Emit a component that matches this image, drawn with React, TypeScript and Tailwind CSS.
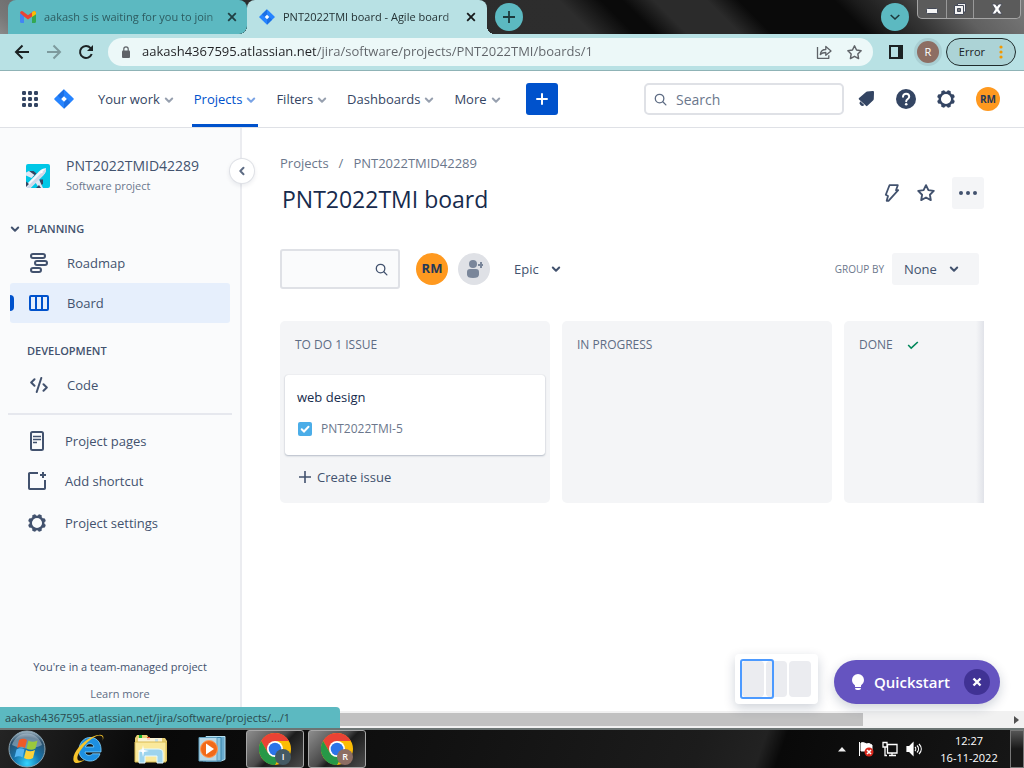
import type { ReactNode } from "react";

function Chevron({ className = "" }: { className?: string }) {
  return (
    <svg viewBox="0 0 10 10" className={`h-[10px] w-[10px] shrink-0 ${className}`} fill="none" stroke="currentColor" strokeWidth="2" strokeLinecap="round" strokeLinejoin="round" aria-hidden="true">
      <path d="M1.8 3.5 5 6.7 8.2 3.5" />
    </svg>
  );
}

function SearchIcon() {
  return (
    <svg viewBox="0 0 14 14" className="h-[13px] w-[13px] shrink-0" fill="none" stroke="currentColor" strokeWidth="1.4" strokeLinecap="round" aria-hidden="true">
      <circle cx="6" cy="6" r="4.6" />
      <path d="m9.5 9.5 3.3 3.3" />
    </svg>
  );
}

function CloseIcon() {
  return (
    <svg viewBox="0 0 10 10" className="h-[10px] w-[10px]" fill="none" stroke="currentColor" strokeWidth="1.8" aria-hidden="true">
      <path d="m1.2 1.2 7.6 7.6M8.8 1.2 1.2 8.8" />
    </svg>
  );
}

function JiraLogo({ className }: { className: string }) {
  return (
    <svg viewBox="0 0 20 20" className={className} aria-hidden="true">
      <path d="M10 .3 19.4 9.3a1 1 0 0 1 0 1.4L10 19.7.6 10.7a1 1 0 0 1 0-1.4z" fill="#2684ff" />
      <path d="M10 .3v6.9L7 10 3.6 6.6z" fill="#1868db" opacity=".75" />
      <path d="M10 19.7v-6.9l3-2.8 3.4 3.4z" fill="#1868db" opacity=".75" />
      <path d="m10 7.2 2.8 2.8-2.8 2.8L7.2 10z" fill="#fff" />
    </svg>
  );
}

const teeth = [22.5, 67.5, 112.5, 157.5, 202.5, 247.5, 292.5, 337.5];

function GearIcon() {
  return (
    <svg viewBox="0 0 20 20" className="h-5 w-5" aria-hidden="true">
      <circle cx="10" cy="10" r="6.3" fill="none" stroke="currentColor" strokeWidth="2.500" />
      {teeth.map((angle) => (
        <rect key={angle} x="8.1" y="1" width="3.8" height="3.600" rx="1.200" fill="currentColor" transform={`rotate(${angle} 10 10)`} />
      ))}
    </svg>
  );
}

function StarIcon({ className, width }: { className: string; width: string }) {
  return (
    <svg viewBox="0 0 20 20" className={className} fill="none" stroke="currentColor" strokeWidth={width} strokeLinejoin="round" aria-hidden="true">
      <path d="m10 2.2 2.4 4.9 5.4.8-3.9 3.8.9 5.4-4.8-2.6-4.8 2.6.9-5.4-3.9-3.8 5.4-.8z" />
    </svg>
  );
}

function TabStrip() {
  return (
    <header className="flex h-[34px] shrink-0 bg-[linear-gradient(45deg,#8a8a8a_0,#777_2%,#2c2c2c_24%,#2d2d2d_56%,#0a0a0a_60%,#0a0a0a_62%,#2b2b2b_65%,#2b2b2b_70%,#0a0a0a_73%,#0a0a0a_82%,#1c1c1c_84%,#343434_88%,#606060_93%,#7a7a7a_100%)]">
      <div className="ml-2 flex w-[239px] items-center rounded-t-lg rounded-br-lg bg-[#5cb9c1] pl-3 pr-[10px] text-[#2d5c61]">
        <svg viewBox="0 0 16 12" className="h-3 w-4 shrink-0" aria-hidden="true">
          <path d="M0 2v8.5A1.5 1.5 0 0 0 1.5 12H4V5z" fill="#4285f4" />
          <path d="M16 2v8.5a1.5 1.5 0 0 1-1.500 1.500H12V5z" fill="#34a853" />
          <path d="M0 2a2 2 0 0 1 3-1.600L8 4.200 13 .4A2 2 0 0 1 16 2L12 5.500 8 8.500 4 5.500z" fill="#ea4335" />
          <path d="M12 1.200 13 .4A2 2 0 0 1 16 2v1.200L12 6z" fill="#fbbc04" />
        </svg>
        <span className="ml-2 min-w-0 flex-1 whitespace-nowrap text-[11px] [mask-image:linear-gradient(90deg,#000_88%,#0004)]">aakash s is waiting for you to join</span>
        <button type="button" aria-label="Close tab" className="text-[#203f43]"><CloseIcon /></button>
      </div>
      <div className="relative flex w-60 items-center rounded-t-lg bg-[#b8e1e4] pl-3 pr-[11px] text-[#243234]">
        <JiraLogo className="h-4 w-4 shrink-0" />
        <span className="ml-2 min-w-0 flex-1 whitespace-nowrap text-[11px] [mask-image:linear-gradient(90deg,#000_86%,#0004)]">PNT2022TMI board - Agile board</span>
        <button type="button" aria-label="Close tab" className="text-[#16191a]"><CloseIcon /></button>
        <span className="absolute bottom-0 left-full h-2 w-2 bg-[radial-gradient(circle_at_100%_0,transparent_8px,#b8e1e4_8px)]" />
        <span className="absolute bottom-0 right-full h-2 w-2 bg-[radial-gradient(circle_at_0_0,transparent_8px,#b8e1e4_8px)]" />
      </div>
      <button type="button" aria-label="New tab" className="ml-2 mt-[3px] flex h-7 w-7 items-center justify-center rounded-full bg-[#5cb9c1] text-[#1d3a3d]">
        <svg viewBox="0 0 12 12" className="h-3 w-3" stroke="currentColor" strokeWidth="1.800" aria-hidden="true"><path d="M6 0v12M0 6h12" /></svg>
      </button>
      <div className="ml-auto flex items-start">
        <button type="button" aria-label="Search tabs" className="mr-2 mt-[3px] flex h-7 w-7 items-center justify-center rounded-full bg-[#5cb9c1] text-[#1d3a3d]">
          <svg viewBox="0 0 10 10" className="h-[10px] w-[10px]" fill="none" stroke="currentColor" strokeWidth="1.600" aria-hidden="true"><path d="m.7 3 4.300 4 4.300-4" /></svg>
        </button>
        <div className="mr-[3px] flex h-[19px] rounded-b-[5px] border border-t-0 border-[#a5a5a5] bg-[#5b5b5b] text-white">
          <button type="button" aria-label="Minimize" className="flex w-[29px] items-center justify-center border-r border-[#999]">
            <svg viewBox="0 0 12 6" className="mt-1 h-[6px] w-3" aria-hidden="true"><rect x=".5" y=".5" width="11" height="5" rx="1" fill="#f4f4f4" stroke="#454a58" /></svg>
          </button>
          <button type="button" aria-label="Restore" className="flex w-[27px] items-center justify-center border-r border-[#999]">
            <svg viewBox="0 0 12 12" className="h-3 w-3" aria-hidden="true">
              <path d="M3.500.5h8V9h-8z" fill="#eee" stroke="#454a58" />
              <path d="M.5 2.500h9v9h-9z" fill="#f4f4f4" stroke="#454a58" /><path d="M3.500 5.500h3v3h-3z" fill="#777" stroke="#454a58" />
            </svg>
          </button>
          <button type="button" aria-label="Close window" className="flex w-[46px] items-center justify-center">
            <svg viewBox="0 0 12 12" className="h-3 w-3" aria-hidden="true">
              <path d="M1 1h3.300L6 3.300 7.700 1H11L7.900 6l3.100 5H7.700L6 8.700 4.300 11H1l3.100-5z" fill="#fff" stroke="#454a58" strokeWidth=".8" />
            </svg>
          </button>
        </div>
      </div>
    </header>
  );
}

function AddressBar() {
  return (
    <div className="flex h-[37px] shrink-0 items-center border-b border-[#8fb3b6] bg-[#b8e1e4] pl-[14px] pr-2 text-[#1b2223]">
      <button type="button" aria-label="Back">
        <svg viewBox="0 0 16 16" className="h-4 w-4" fill="none" stroke="currentColor" strokeWidth="2" aria-hidden="true"><path d="M15 8H2M8.500 1.500 2 8l6.500 6.500" /></svg>
      </button>
      <button type="button" aria-label="Forward" className="ml-4 text-[#7d9a9d]">
        <svg viewBox="0 0 16 16" className="h-4 w-4" fill="none" stroke="currentColor" strokeWidth="2" aria-hidden="true"><path d="M1 8h13M7.500 1.500 14 8l-6.500 6.500" /></svg>
      </button>
      <button type="button" aria-label="Reload" className="ml-4">
        <svg viewBox="0 0 16 16" className="h-4 w-4" fill="none" stroke="currentColor" strokeWidth="2" aria-hidden="true"><path d="M13.700 10A6 6 0 1 1 12.600 4.100L14 5.500" /><path d="M15 1v6H9z" fill="currentColor" stroke="none" /></svg>
      </button>
      <div className="ml-[14px] flex h-7 min-w-0 flex-1 items-center rounded-full bg-[#ecf8f8] pl-[14px] pr-[10px] text-[#5f6368]">
        <svg viewBox="0 0 8 12" className="h-3 w-2 shrink-0" aria-hidden="true"><rect y="4.500" width="8" height="7.500" rx="1" fill="currentColor" /><path d="M1.800 5V3a2.200 2.200 0 0 1 4.400 0v2" fill="none" stroke="currentColor" strokeWidth="1.200" /></svg>
        <input aria-label="Address" defaultValue="aakash4367595.atlassian.net/jira/software/projects/PNT2022TMI/boards/1" className="ml-3 min-w-0 flex-1 bg-[linear-gradient(90deg,#202124_174px,#5f6368_174px)] bg-clip-text text-[13px] text-transparent outline-none" />
        <button type="button" aria-label="Share">
          <svg viewBox="0 0 16 16" className="h-4 w-4" fill="none" stroke="currentColor" strokeWidth="1.300" strokeLinejoin="round" aria-hidden="true"><path d="M1.500 3v11.300h11.300v-3" /><path d="M4.300 10.500c.4-3.500 2.200-5 5.500-5V2.500L15 7l-5.200 4.300V8.500c-2.500 0-4 .4-5.500 2z" /></svg>
        </button>
        <button type="button" aria-label="Bookmark" className="ml-[14px]"><StarIcon className="h-[17px] w-[17px]" width="1.700" /></button>
      </div>
      <button type="button" aria-label="Side panel" className="ml-4">
        <svg viewBox="0 0 14 14" className="h-[14px] w-[14px]" aria-hidden="true"><path d="M0 0h14v14H0zM2 2v10h7V2z" fill="currentColor" fillRule="evenodd" /></svg>
      </button>
      <button type="button" aria-label="Profile R" className="ml-[14px] flex h-[22px] w-[22px] items-center justify-center rounded-full bg-[#8d6e63] text-[11px] text-white ring-[3px] ring-[#a9cfd3]">R</button>
      <button type="button" className="ml-[7px] flex h-7 items-center justify-between rounded-full border border-[#1f2b2c] bg-[#acd3d6] px-3 text-[11px]">
        Error
        <svg viewBox="0 0 4 14" className="ml-[14px] h-[14px] w-1" fill="#f29900" aria-hidden="true"><circle cx="2" cy="2" r="1.600" /><circle cx="2" cy="7" r="1.600" /><circle cx="2" cy="12" r="1.600" /></svg>
      </button>
    </div>
  );
}

const navItems = ["Your work", "Projects", "Filters", "Dashboards", "More"];
const gridDots = [1, 7, 13];

function JiraNav() {
  return (
    <nav className="flex h-[57px] shrink-0 items-center border-b border-[#dfe1e6] bg-white pl-[22px] pr-6 text-[#344563]">
      <button type="button" aria-label="App switcher">
        <svg viewBox="0 0 16 16" className="h-4 w-4" fill="currentColor" aria-hidden="true">
          {gridDots.map((y) => gridDots.map((x) => <rect key={`${x}-${y}`} x={x - 1} y={y - 1} width="4" height="4" rx="1.200" />))}
        </svg>
      </button>
      <a href="#home" aria-label="Jira home" className="ml-4"><JiraLogo className="h-5 w-5" /></a>
      <div className="ml-[18px] flex gap-2 self-stretch">
        {navItems.map((item) => {
          const active = item === "Projects";
          return (
            <button key={item} type="button" className={`relative flex items-center gap-1 whitespace-nowrap px-[6px] pt-[2px] text-[13px] font-medium ${active ? "text-[#0052cc]" : ""}`}>
              {item}
              <Chevron className={active ? "text-[#7aa3e5]" : "text-[#97a0af]"} />
              {active && <span className="absolute inset-x-1 bottom-0 h-[3px] bg-[#0052cc]" />}
            </button>
          );
        })}
      </div>
      <button type="button" aria-label="Create" className="ml-[19px] flex h-8 w-8 shrink-0 items-center justify-center rounded-[3px] bg-[#0052cc] text-white">
        <svg viewBox="0 0 12 12" className="h-3 w-3" stroke="currentColor" strokeWidth="2" strokeLinecap="round" aria-hidden="true"><path d="M6 1v10M1 6h10" /></svg>
      </button>
      <label className="ml-auto flex h-8 w-[200px] items-center rounded-[5px] border-2 border-[#dfe1e6] pl-2 text-[#5e6c84]">
        <SearchIcon />
        <input type="search" placeholder="Search" aria-label="Search" className="ml-[9px] min-w-0 flex-1 bg-transparent text-[14px] outline-none placeholder:text-[#6b778c]" />
      </label>
      <button type="button" aria-label="Notifications" className="ml-3">
        <svg viewBox="0 0 20 20" className="h-5 w-5" fill="currentColor" aria-hidden="true"><path d="M16.500 2C17.500 1.900 18 2.400 18 3.400l-.2 6.300c0 .8-.2 1.200-.8 1.800l-5.600 5.300a1 1 0 0 1-1.400 0L3 10.500a1 1 0 0 1 0-1.400l.4-.4L9.800 3.300c.4-.4.800-.6 1.400-.7z" /><path d="M4.200 12.200 8.300 16a2.800 2.800 0 0 1-4.100-3.800z" /></svg>
      </button>
      <button type="button" aria-label="Help" className="ml-5">
        <svg viewBox="0 0 20 20" className="h-5 w-5" aria-hidden="true"><circle cx="10" cy="10" r="10" fill="currentColor" /><path d="M7 7.800c0-4 6.200-3.900 6.200 0 0 2.200-3 2.200-3 4.500" fill="none" stroke="#fff" strokeWidth="2" strokeLinecap="round" /><circle cx="10.200" cy="15.300" r="1.300" fill="#fff" /></svg>
      </button>
      <button type="button" aria-label="Settings" className="ml-5"><GearIcon /></button>
      <button type="button" aria-label="Your profile" className="ml-5 flex h-6 w-6 items-center justify-center rounded-full bg-[#ff991f] text-[10px] font-bold text-[#253858]">RM</button>
    </nav>
  );
}

function SideLink({ icon, label, active = false, shifted = false }: { icon: ReactNode; label: string; active?: boolean; shifted?: boolean }) {
  return (
    <a href={`#${label.toLowerCase().replace(" ", "-")}`} className={`relative mx-[10px] flex h-10 items-center gap-[18px] rounded-[3px] text-[13px] ${shifted ? "pl-[17px]" : "pl-[19px]"} ${active ? "bg-[#e6effc]" : ""}`}>
      {active && <span className="absolute left-0 top-3 h-4 w-1 rounded-r-sm bg-[#0052cc]" />}
      <span className={`flex w-5 justify-center ${active ? "text-[#0052cc]" : ""}`}>{icon}</span>
      <span className="pt-[2px]">{label}</span>
    </a>
  );
}

function Sidebar() {
  return (
    <aside className="relative flex w-[242px] shrink-0 flex-col border-r-2 border-[#ebecf0] bg-[#fafbfc] text-[#42526e]">
      <div className="flex items-center gap-4 pl-[26px] pt-7">
        <svg viewBox="0 0 24 24" className="h-6 w-6" aria-hidden="true">
          <rect width="24" height="24" rx="2" fill="#00c7e6" />
          <path d="M3 7h4.500l3 2.500-3.500 3.500-4-3z" fill="#344563" />
          <path d="M0 8.500 3 7l5.500 4L5.500 14 0 11.500z" fill="#dfe8f5" />
          <path d="M13.500 15.500 17 15.500V20l-2.500 1.500z" fill="#344563" />
          <path d="M9.500 18.500 13 15.500 17 24h-4z" fill="#dfe8f5" />
          <path d="M0 24v-3L13 7.500C15.500 5 18 4 20 4.200c.3 2.300-.4 4.600-2.700 7L4.500 24z" fill="#f4f7fc" />
          <path d="M4.500 24 17.300 11.200c2.300-2.400 3-4.700 2.700-7L1.500 22.500 1 24z" fill="#cfd9ea" />
          <path d="M0 17.500 3 20l-3 3zM10 24l3-3 2 3z" fill="#344563" /><circle cx="15.700" cy="8.300" r="1" fill="#fff" />
        </svg>
        <div>
          <div className="text-[14px] leading-5">PNT2022TMID42289</div>
          <div className="text-[11px] leading-5 text-[#6b778c]">Software project</div>
        </div>
      </div>
      <h2 className="mt-[21px] flex h-6 items-center gap-[7px] pl-[10px] text-[11px] font-semibold"><Chevron />PLANNING</h2>
      <div className="mt-[2px]">
        <SideLink label="Roadmap" icon={<svg viewBox="0 0 18 20" className="h-5 w-[18px]" fill="none" stroke="currentColor" strokeWidth="2" aria-hidden="true"><rect x="1" y="1" width="14" height="4" rx="2" /><rect x="5" y="8" width="12" height="4" rx="2" /><rect x="1" y="15" width="10" height="4" rx="2" /></svg>} />
        <SideLink active label="Board" icon={<svg viewBox="0 0 20 16" className="h-4 w-5" fill="none" stroke="currentColor" strokeWidth="2" aria-hidden="true"><rect x="1" y="1" width="18" height="14" rx="1" /><path d="M7 1v14M13 1v14" /></svg>} />
      </div>
      <h2 className="mt-4 flex h-6 items-center pl-[27px] text-[11px] font-semibold">DEVELOPMENT</h2>
      <div className="mt-[2px]">
        <SideLink label="Code" icon={<svg viewBox="0 0 18 16" className="h-4 w-[18px]" fill="none" stroke="currentColor" strokeWidth="2" strokeLinecap="round" strokeLinejoin="round" aria-hidden="true"><path d="M4.500 2.200 1.200 5.500 4.500 8.800M13.500 7.200l3.300 3.300-3.300 3.300M11.300 1 6.700 15" /></svg>} />
      </div>
      <hr className="mx-2 mt-2 border-t-2 border-[#e6e8ee]" />
      <div className="mt-[6px]">
        <SideLink shifted label="Project pages" icon={<svg viewBox="0 0 14 20" className="h-5 w-[14px]" fill="none" stroke="currentColor" strokeWidth="2" aria-hidden="true"><rect x="1" y="1" width="12" height="18" rx="1.500" /><path d="M3 5.500h8M3 8.500h8M3 11.500h4" strokeWidth="1.600" /></svg>} />
        <SideLink shifted label="Add shortcut" icon={<svg viewBox="0 0 18 18" className="h-[18px] w-[18px]" fill="none" stroke="currentColor" strokeWidth="2" aria-hidden="true"><path d="M10 1H1.800A.8.800 0 0 0 1 1.800v14.400c0 .4.400.8.800.8h14.400c.4 0 .8-.4.800-.8V8M15 0v6M12 3h6" /></svg>} />
      </div>
      <div className="mt-[2px]">
        <SideLink shifted label="Project settings" icon={<GearIcon />} />
      </div>
      <div className="mt-auto pb-1 text-center text-[11px] leading-[27px]">
        <p>You're in a team-managed project</p>
        <a href="#learn" className="block font-medium text-[#5e6c84]">Learn more</a>
      </div>
      <button type="button" aria-label="Collapse sidebar" className="absolute -right-[14px] top-[31px] z-10 flex h-6 w-6 items-center justify-center rounded-full bg-white text-[#5e6c84] shadow-[0_0_0_1px_#dfe1e6,0_2px_4px_1px_#091e4214]"><Chevron className="rotate-90" /></button>
    </aside>
  );
}

function Column({ title, children, done = false }: { title: string; children?: ReactNode; done?: boolean }) {
  return (
    <section className="min-h-[182px] w-[270px] shrink-0 rounded-[5px] bg-[#f4f5f7] px-[5px]">
      <h2 className="flex h-12 items-center gap-[14px] pl-[10px] text-[12px] text-[#5e6c84]">
        {title}
        {done && <svg viewBox="0 0 12 10" className="h-[10px] w-3" fill="none" stroke="#00875a" strokeWidth="1.600" aria-hidden="true"><path d="m1.200 5 3 3.200L10.800 2" /></svg>}
      </h2>
      {children}
    </section>
  );
}

function Board() {
  return (
    <main className="relative flex min-w-0 flex-1 flex-col bg-white pl-[38px] pr-10 pt-[26px] text-[#42526e]">
      <div className="flex h-5 items-center gap-[10px] text-[13px] text-[#6b778c]">
        <a href="#projects">Projects</a><span>/</span><a href="#project">PNT2022TMID42289</a>
      </div>
      <div className="mt-[3px] flex h-8 items-center">
        <h1 className="mt-3 pl-[2px] text-[23px] leading-8 font-medium text-[#172b4d]">PNT2022TMI board</h1>
        <button type="button" aria-label="Automation" className="ml-auto">
          <svg viewBox="0 0 16 20" className="h-5 w-4" fill="none" stroke="currentColor" strokeWidth="1.800" strokeLinejoin="round" aria-hidden="true"><path d="M5.500 2.200h8.300L12 7.200h2.200L4.500 17.800H2.700L4 13l-2.200-1.200z" /></svg>
        </button>
        <button type="button" aria-label="Star" className="ml-4"><StarIcon className="h-5 w-5" width="1.900" /></button>
        <button type="button" aria-label="More actions" className="ml-4 flex h-8 w-8 items-center justify-center rounded-[3px] bg-[#f4f5f7]">
          <svg viewBox="0 0 18 4" className="h-1 w-[18px]" fill="currentColor" aria-hidden="true"><circle cx="2" cy="2" r="2" /><circle cx="9" cy="2" r="2" /><circle cx="16" cy="2" r="2" /></svg>
        </button>
      </div>
      <div className="mt-10 flex items-center">
        <label className="flex h-10 w-[120px] items-center rounded-[3px] border-2 border-[#dfe1e6] bg-[#fafbfc] pr-[10px]">
          <input aria-label="Search board" className="min-w-0 flex-1 bg-transparent pl-2 text-[13px] outline-none" />
          <SearchIcon />
        </label>
        <button type="button" className="ml-4 flex h-8 w-8 items-center justify-center rounded-full bg-[#ff991f] text-[13px] font-bold text-[#253858]">RM</button>
        <button type="button" aria-label="Add people" className="ml-[10px] flex h-8 w-8 items-center justify-center rounded-full bg-[#dfe1e6] text-[#7a869a]">
          <svg viewBox="0 0 18 18" className="h-[18px] w-[18px]" fill="currentColor" aria-hidden="true"><circle cx="8" cy="4" r="4" /><path d="M2 12a3 3 0 0 1 3-3h6a3 3 0 0 1 3 3v2.500C14 17 12 18 8 18s-6-1-6-3.500zM15 2h2v2h2v2h-2v2h-2V6h-2V4h2z" /></svg>
        </button>
        <button type="button" className="ml-6 flex items-center gap-3 text-[13px] font-medium"><span className="pt-[2px]">Epic</span><Chevron /></button>
        <label htmlFor="group-by" className="ml-auto text-[10px] text-[#6b778c]">GROUP BY</label>
        <div className="relative ml-2 mr-[5px] flex items-center">
          <select id="group-by" className="h-8 w-[87px] appearance-none rounded-[3px] bg-[#f4f5f7] pl-3 pt-[2px] text-[13px] font-medium"><option>None</option></select>
          <span className="pointer-events-none absolute right-5"><Chevron /></span>
        </div>
      </div>
      <div className="relative mt-8 flex gap-3 overflow-hidden">
        <Column title="TO DO 1 ISSUE">
          <article className="mt-[6px] h-20 rounded-[3px] bg-white pl-3 pt-3 shadow-[0_1px_2px_#091e4240,0_0_1px_#091e4230]">
            <p className="text-[13px] leading-5 text-[#172b4d]">web design</p>
            <div className="mt-3 flex h-5 items-center gap-[9px] pl-[1px] text-[12px] text-[#6b778c]">
              <svg viewBox="0 0 14 14" className="h-[14px] w-[14px]" aria-hidden="true"><rect width="14" height="14" rx="2" fill="#4bade8" /><path d="m3.700 7.200 2.300 2.300L10.500 4.700" fill="none" stroke="#fff" strokeWidth="2" strokeLinecap="round" /></svg>
              PNT2022TMI-5
            </div>
          </article>
          <button type="button" className="mt-3 flex h-5 items-center gap-[6px] pl-[14px] text-[13px] font-medium">
            <svg viewBox="0 0 12 12" className="h-3 w-3" stroke="currentColor" strokeWidth="1.600" aria-hidden="true"><path d="M6 0v12M0 6h12" /></svg>
            <span className="pt-[2px]">Create issue</span>
          </button>
        </Column>
        <Column title="IN PROGRESS" />
        <Column title="DONE" done />
        <div className="pointer-events-none absolute inset-y-0 right-0 w-2 bg-gradient-to-r from-transparent to-[#e1e3e9]" />
      </div>
      <div className="absolute bottom-[7px] right-6 flex items-end gap-4">
        <div className="relative flex h-[50px] w-[83px] gap-[2px] rounded bg-white p-[7px] shadow-[0_4px_12px_#091e4233]">
          <span className="flex-1 rounded-sm bg-[#ebecf0]" /><span className="flex-1 rounded-sm bg-[#ebecf0]" /><span className="flex-1 rounded-sm bg-[#ebecf0]" />
          <span className="absolute left-[5px] top-[5px] h-10 w-[34px] rounded-[3px] border-2 border-[#4c9aff]" />
        </div>
        <div className="flex h-11 w-[166px] items-center rounded-full bg-[#6554c0] pl-4 pr-[10px] text-white shadow-[0_4px_12px_#091e4233]">
          <button type="button" className="flex items-center gap-2 text-[15px] font-semibold">
            <svg viewBox="0 0 16 18" className="h-[18px] w-4" fill="#fff" aria-hidden="true"><path d="M8 1a6 6 0 0 0-6 6c0 2.500 1.500 4 3 5.500V14h6v-1.500c1.500-1.500 3-3 3-5.500a6 6 0 0 0-6-6zM5 15h6a2 2 0 0 1-2 2H7a2 2 0 0 1-2-2z" /></svg>
            Quickstart
          </button>
          <button type="button" aria-label="Close quickstart" className="ml-auto flex h-[26px] w-[26px] items-center justify-center rounded-full bg-[#403294]">
            <svg viewBox="0 0 10 10" className="h-[10px] w-[10px]" stroke="#fff" strokeWidth="2.400" aria-hidden="true"><path d="m1.500 1.500 7 7m0-7-7 7" /></svg>
          </button>
        </div>
      </div>
    </main>
  );
}

function ChromeButton({ initial, badge }: { initial: string; badge: string }) {
  return (
    <button type="button" aria-label={`Chrome, profile ${initial}`} className="relative flex h-[38px] w-[58px] items-center justify-center rounded-[3px] border border-[#a6a6a6] bg-[linear-gradient(135deg,#8d8d8d,#4a4a4a_45%,#1c1c1c_55%,#4b4b4b)]">
      <svg viewBox="0 0 32 32" className="h-8 w-8" aria-hidden="true">
        <circle cx="16" cy="16" r="16" fill="#fbbc04" />
        <path d="M2.140 8A16 16 0 0 1 29.860 8H16L9.070 20z" fill="#ea4335" />
        <path d="M2.140 8A16 16 0 0 0 16 32l6.930-12L16 16 9.070 20z" fill="#279847" />
        <circle cx="16" cy="16" r="8" fill="#fff" /><circle cx="16" cy="16" r="6.300" fill="#2b74e8" />
      </svg>
      <span className={`absolute bottom-[2px] right-3 flex h-4 w-4 items-center justify-center rounded-full text-[9px] font-semibold text-white ${badge}`}>{initial}</span>
    </button>
  );
}

function Taskbar() {
  return (
    <footer className="flex h-10 shrink-0 items-center border-t-2 border-[#6c7574] bg-[linear-gradient(110deg,#242424,#080808_15%,#101010_40%,#1c1c1c_68%,#222_74%,#090909_76%,#171717)] pl-2 text-white">
      <button type="button" aria-label="Start">
        <svg viewBox="0 0 38 38" className="h-[38px] w-[38px]" aria-hidden="true">
          <defs><radialGradient id="orb" cx=".5" cy=".9" r=".9"><stop offset="0" stopColor="#36d5ff" /><stop offset=".4" stopColor="#1675ad" /><stop offset=".8" stopColor="#2a4e69" /><stop offset="1" stopColor="#a9bdca" /></radialGradient></defs>
          <circle cx="19" cy="19" r="18" fill="url(#orb)" stroke="#8ca5b3" />
          <path d="M4 15A15.500 15.500 0 0 1 34 15c-8 4-20 5-30 0z" fill="#d6e4ed" opacity=".4" />
          <path d="M11 10c3-2 6-1.500 8 0l-2 8c-3-2-5-1.500-8 0z" fill="#ef5a28" /><path d="M20.500 10.500c3 2 6 1.500 9 0l-2 8c-3 2-6 1.500-9 0z" fill="#9ac93c" />
          <path d="M8.500 19.500c3-2 5.500-1.500 8 0l-2 8c-2.500-2-5-1.500-8 0z" fill="#54b5f2" /><path d="M18 20c3 2 6 1.500 9 0l-2 8c-3 2-6 1.500-9 0z" fill="#fdd23a" />
        </svg>
      </button>
      <button type="button" aria-label="Internet Explorer" className="ml-[26px]">
        <svg viewBox="0 0 34 34" className="h-[34px] w-[34px]" aria-hidden="true">
          <path d="M29 20H13c.4 3.500 5 4.500 7.500 1.800H28c-1.500 5-6 7.700-11 7.200-7-.7-11-6-10-12.500C8 9.500 13 5 19 5.500c7 .5 10.700 6.500 10 14.500zM13.300 15h8.500c-.5-4.500-7-4.500-8.500 0z" fill="#1d8fe1" stroke="#84d4ff" strokeWidth=".8" fillRule="evenodd" />
          <path d="M30.500 9c3-7-2-8-10.500-4C9 10 0 22 1.500 28.500 2.800 33 8.500 31 13 27.500 8 30 4.500 29 5.500 24.500 7.500 17 20 4 27 3.500c3.500-.2 4.500 2 3.500 5.500z" fill="#f6c42c" />
        </svg>
      </button>
      <button type="button" aria-label="File Explorer" className="ml-[28px]">
        <svg viewBox="0 0 34 32" className="h-8 w-[34px]" aria-hidden="true">
          <path d="M1 5 3 2h10l2 3h16l2 3v20H1z" fill="#e8cf73" /><path d="M5 2h3v3H5z" fill="#18b233" /><path d="M13 4h3v3h-3z" fill="#dc4828" /><path d="M21 6h3v3h-3z" fill="#258ccc" /><path d="M4 5h24v4H4z" fill="#fffef3" opacity=".75" />
          <path d="M1 9h31v20H1z" fill="#fae99c" stroke="#d9bc55" /><path d="M5 30V20c0-3 2-4 5-4h14c3 0 5 1 5 4v10h-6v-7H11v7z" fill="#9ed4ed" stroke="#e7faff" />
          <path d="m9 12 1 5 5 1-5 1-1 5-1-5-5-1 5-1z" fill="#fff" />
        </svg>
      </button>
      <button type="button" aria-label="Media Player" className="ml-[30px]">
        <svg viewBox="0 0 28 26" className="h-[26px] w-7" aria-hidden="true">
          <path d="M8 .5h19v23l-4 1.500H8z" fill="#69aacd" stroke="#b5e0f1" /><path d="M5 1.500h18V25H5z" fill="#8cc4de" stroke="#3984ab" /><path d="M1 1.500h18V25H1z" fill="#b9d9e8" stroke="#5e9ebd" />
          <circle cx="11" cy="13" r="8.500" fill="#f26a19" stroke="#ff9a54" /><path d="m8 7.500 8 5.500-8 5.500z" fill="#fff" />
        </svg>
      </button>
      <div className="ml-5 flex gap-1">
        <ChromeButton initial="I" badge="bg-[#455a64]" />
        <ChromeButton initial="R" badge="bg-[#8d6e63]" />
      </div>
      <div className="ml-auto flex items-center">
        <button type="button" aria-label="Show hidden icons"><svg viewBox="0 0 8 5" className="h-[5px] w-2" fill="#eee" aria-hidden="true"><path d="m4 0 4 4.500H0z" /></svg></button>
        <svg viewBox="0 0 16 16" className="ml-3 h-4 w-4" role="img" aria-label="Action Center"><path d="M1.500 1v14M3 2c4-1.500 4 2 8 .5l3 1.500v6H3z" fill="#fff" stroke="#fff" /><circle cx="11" cy="11" r="4.500" fill="#d8281c" /><path d="m9 9 4 4m0-4-4 4" stroke="#fff" strokeWidth="1.600" /></svg>
        <svg viewBox="0 0 16 16" className="ml-2 h-4 w-4" fill="none" stroke="#fff" strokeWidth="1.300" role="img" aria-label="Network"><path d="M5.500 3.500H15V12H5.500zM10 12v2.500M7 14.500h7M1 1.500h4V6H1zM3 6v8.500h2" /></svg>
        <svg viewBox="0 0 16 16" className="ml-2 h-4 w-4" fill="none" stroke="#fff" strokeWidth="1.200" role="img" aria-label="Volume"><path d="M1 5.500h2.500L7 2v12l-3.500-3.500H1z" fill="#fff" /><path d="M9 6c1 1 1 3 0 4M11 4.500c2 2 2 5 0 7M13 3c3 3 3 7 0 10" /></svg>
        <time className="ml-4 w-[62px] text-center text-[11px] leading-[17px]">12:27<br />16-11-2022</time>
        <button type="button" aria-label="Show desktop" className="ml-[10px] h-[38px] w-[14px] border border-[#777] bg-[linear-gradient(#555,#181818_50%)]" />
      </div>
    </footer>
  );
}

export default function App() {
  return (
    <div className="flex min-h-screen flex-col font-['Open_Sans','Noto_Sans',sans-serif] antialiased">
      <TabStrip />
      <AddressBar />
      <JiraNav />
      <div className="relative flex flex-1 flex-col">
        <div className="flex flex-1"><Sidebar /><Board /></div>
        <div className="flex h-[17px] items-center bg-[#f1f1f1] pr-[5px]">
          <div className="h-[13px] w-[863px] shrink bg-[#c1c1c1]" />
          <svg viewBox="0 0 5 8" className="ml-auto h-2 w-[5px]" fill="#505050" aria-hidden="true"><path d="m0 0 5 4-5 4z" /></svg>
        </div>
        <div className="absolute bottom-0 left-0 z-20 h-[21px] w-[340px] rounded-tr-[4px] bg-[#5cb9c1] pl-[5px] text-[11px] leading-[21px] text-[#2b494d]">aakash4367595.atlassian.net/jira/software/projects/.../1</div>
      </div>
      <Taskbar />
    </div>
  );
}
